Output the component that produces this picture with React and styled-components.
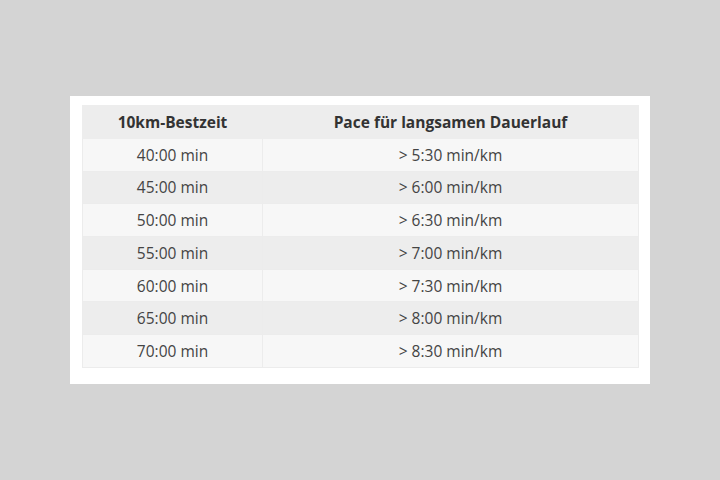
import styled, { createGlobalStyle } from "styled-components";

const GlobalStyle = createGlobalStyle`
  html, body {
    margin: 0;
    padding: 0;
    background-color: #d4d4d4;
    font-family: "Open Sans", "Liberation Sans", sans-serif;
  }
`;

const Wrapper = styled.div`
  display: flex;
  justify-content: center;
  align-items: center;
  height: 100vh;
`;

const Card = styled.div`
  width: 557px;
  padding: 9px 11px 16px 12px;
  background-color: #fff;
`;

const Table = styled.table`
  width: 100%;
  border-collapse: collapse;
  table-layout: fixed;
  font-size: 15.5px;
  color: #444;
`;

const Row = styled.tr`
  height: 32.7px;
  background-color: ${(p) => (p.$striped ? "#ededed" : "#f7f7f7")};
`;

const HeadCell = styled.th`
  padding: 0 8px;
  font-weight: 700;
  color: #333;
  text-align: center;
  border: 1px solid #ededed;
`;

const Cell = styled.td`
  padding: 0 8px;
  text-align: center;
  border: 1px solid #ececec;
`;

const rows = [
  ["40:00 min", "> 5:30 min/km"],
  ["45:00 min", "> 6:00 min/km"],
  ["50:00 min", "> 6:30 min/km"],
  ["55:00 min", "> 7:00 min/km"],
  ["60:00 min", "> 7:30 min/km"],
  ["65:00 min", "> 8:00 min/km"],
  ["70:00 min", "> 8:30 min/km"],
];

const App = () => {
  return (
    <Wrapper>
      <GlobalStyle />
      <Card>
        <Table>
          <colgroup>
            <col style={{ width: "180px" }} />
            <col />
          </colgroup>
          <thead>
            <Row $striped>
              <HeadCell>10km-Bestzeit</HeadCell>
              <HeadCell>Pace für langsamen Dauerlauf</HeadCell>
            </Row>
          </thead>
          <tbody>
            {rows.map(([time, pace], i) => (
              <Row key={time} $striped={i % 2 === 1}>
                <Cell>{time}</Cell>
                <Cell>{pace}</Cell>
              </Row>
            ))}
          </tbody>
        </Table>
      </Card>
    </Wrapper>
  );
};

export default App;
